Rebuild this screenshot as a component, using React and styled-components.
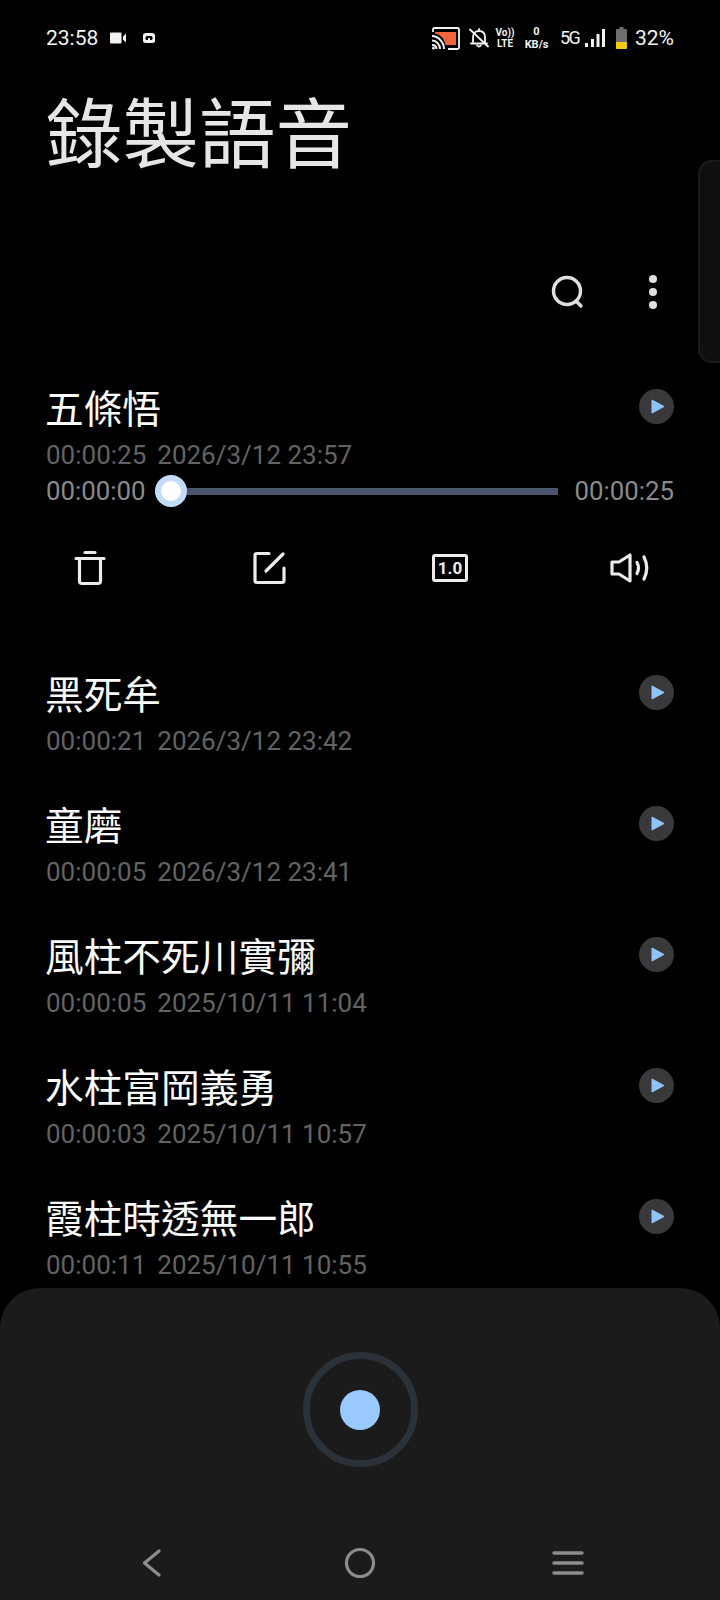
import React from "react";
import styled, { createGlobalStyle } from "styled-components";

const Global = createGlobalStyle`
  html, body { margin: 0; padding: 0; background: #000; }
  #root { width: 720px; height: 1600px; }
`;

const Page = styled.div`
  position: relative;
  width: 720px;
  height: 1600px;
  overflow: hidden;
  background: #000;
  display: flex;
  flex-direction: column;
  font-family: Roboto, "Noto Sans CJK TC", sans-serif;
  color: #fff;
`;

const StatusBar = styled.div`
  height: 76px;
  padding: 0 46px;
  display: flex;
  align-items: center;
  justify-content: space-between;
  font-size: 21px;
  color: #f2f2f2;
`;
const StatusGroup = styled.div`
  display: flex;
  align-items: center;
`;
const StatusText = styled.span`
  display: block;
  margin-left: ${(p) => p.$ml || 0}px;
  width: ${(p) => (p.$w ? `${p.$w}px` : "auto")};
  font-size: ${(p) => p.$size || 21}px;
  letter-spacing: ${(p) => p.$ls || 0}px;
  font-weight: 400;
  line-height: 1;
  white-space: nowrap;
`;
const StatusIcon = styled.svg`
  display: block;
  flex: none;
  margin-left: ${(p) => p.$ml || 0}px;
`;
const TinyStack = styled.div`
  margin-left: ${(p) => p.$ml || 0}px;
  width: ${(p) => p.$w}px;
  display: flex;
  flex-direction: column;
  align-items: center;
  font-size: ${(p) => p.$size || 10}px;
  font-weight: 700;
  line-height: ${(p) => p.$lh || 11}px;
  white-space: nowrap;
`;

const Title = styled.h1`
  margin: 0;
  padding: 0 46px;
  height: 110px;
  font-size: 76.5px;
  font-weight: 400;
  line-height: 105px;
  color: #e6e6e6;
  font-family: "Noto Sans CJK TC", sans-serif;
`;

const Toolbar = styled.div`
  margin-top: 86px;
  height: 40px;
  display: flex;
  justify-content: flex-end;
  align-items: center;
  gap: 64px;
  padding-right: 63px;
  color: #e0e0e0;
`;

const List = styled.div`
  flex: 1;
  margin-top: 69px;
  padding: 0 46px;
  display: flex;
  flex-direction: column;
  gap: 35px;
  min-height: 0;
`;

const Item = styled.div`
  display: flex;
  flex-direction: column;
  margin-bottom: ${(p) => (p.$open ? 36 : 0)}px;
`;
const Row = styled.div`
  display: flex;
  justify-content: space-between;
  align-items: flex-start;
`;
const Name = styled.div`
  margin-left: -1px;
  font-family: "Noto Sans CJK TC", sans-serif;
  font-size: 38.7px;
  line-height: 50px;
  color: #fafafa;
`;
const Meta = styled.div`
  display: flex;
  gap: 11px;
  margin-top: 2px;
  font-size: 26px;
  line-height: 44px;
  color: #636363;
`;
const PlayButton = styled.div`
  width: 35px;
  height: 35px;
  margin-top: 8px;
  border-radius: 50%;
  background: #39393b;
  display: flex;
  align-items: center;
  justify-content: center;
`;

const Player = styled.div`
  height: 28px;
  display: flex;
  align-items: center;
  gap: 10px;
  font-size: 25.8px;
  color: #8a8a8a;
`;
const Track = styled.div`
  flex: 1;
  height: 7px;
  background: #4a566d;
  display: flex;
  align-items: center;
  margin-right: 7px;
`;
const Thumb = styled.div`
  width: 32px;
  height: 32px;
  flex: none;
  box-sizing: border-box;
  border-radius: 50%;
  background: #fff;
  border: 6px solid #c4dcf8;
`;

const Actions = styled.div`
  margin: 35px -46px 0;
  height: 56px;
  display: grid;
  grid-template-columns: repeat(4, 1fr);
  justify-items: center;
  align-items: center;
  color: #ececec;
`;
const SpeedBadge = styled.div`
  width: 36px;
  height: 28px;
  box-sizing: border-box;
  border: 3px solid currentColor;
  border-radius: 3px;
  display: flex;
  align-items: center;
  justify-content: center;
  font-size: 17px;
  font-weight: 700;
  line-height: 1;
`;

const Handle = styled.div`
  position: absolute;
  right: -12px;
  top: 160px;
  width: 34px;
  height: 203px;
  box-sizing: border-box;
  border: 2px solid #1b1b1b;
  border-radius: 14px;
  background: #0f0f0f;
`;

const Sheet = styled.div`
  flex: none;
  height: 312px;
  background: #1b1b1b;
  border-radius: 40px 40px 0 0;
  display: flex;
  flex-direction: column;
  align-items: center;
`;
const RecordRing = styled.div`
  margin-top: 64px;
  width: 115px;
  height: 115px;
  box-sizing: border-box;
  border: 7px solid #2b3138;
  border-radius: 50%;
  display: flex;
  align-items: center;
  justify-content: center;
`;
const RecordDot = styled.div`
  width: 40px;
  height: 40px;
  border-radius: 50%;
  background: #99c9ff;
`;
const NavBar = styled.div`
  margin-top: 66px;
  width: 624px;
  height: 60px;
  display: grid;
  grid-template-columns: repeat(3, 1fr);
  justify-items: center;
  align-items: center;
  color: #8c8c8c;
`;

const Icon = styled.svg`
  display: block;
  fill: none;
  stroke: currentColor;
  stroke-linecap: round;
  stroke-linejoin: round;
`;

const Play = () => (
  <PlayButton>
    <svg width="14" height="15" viewBox="0 0 14 15" style={{ marginLeft: 2 }}>
      <path d="M1 1 L13 7.5 L1 14 Z" fill="#8fc4fb" stroke="#8fc4fb" strokeLinejoin="round" />
    </svg>
  </PlayButton>
);

const records = [
  ["黑死牟", "00:00:21", "2026/3/12 23:42"],
  ["童磨", "00:00:05", "2026/3/12 23:41"],
  ["風柱不死川實彌", "00:00:05", "2025/10/11 11:04"],
  ["水柱富岡義勇", "00:00:03", "2025/10/11 10:57"],
  ["霞柱時透無一郎", "00:00:11", "2025/10/11 10:55"],
];

const Record = ({ name, len, date }) => (
  <Row>
    <div>
      <Name>{name}</Name>
      <Meta>
        <span>{len}</span>
        <span>{date}</span>
      </Meta>
    </div>
    <Play />
  </Row>
);

export default function App() {
  return (
    <Page>
      <Global />
      <StatusBar>
        <StatusGroup>
          <StatusText>23:58</StatusText>
          <StatusIcon $ml={12} width="16" height="12" viewBox="0 0 16 12">
            <rect x="0" y="0.5" width="11.5" height="11" rx="1" fill="#f2f2f2" />
            <path d="M13 4.5 L16 1.5 V10.5 L13 7.5 Z" fill="#f2f2f2" />
          </StatusIcon>
          <StatusIcon $ml={17} width="12" height="10" viewBox="0 0 12 10">
            <rect x="0" y="0" width="12" height="10" rx="2.5" fill="#f2f2f2" />
            <rect x="2.5" y="3" width="7" height="4" rx="1.5" fill="#000" />
            <rect x="5" y="5" width="2" height="3" fill="#f2f2f2" />
          </StatusIcon>
        </StatusGroup>
        <StatusGroup>
          <StatusIcon width="28" height="23" viewBox="0 0 28 23">
            <path d="M3 5 H24 V18 H13.5 C12.5 12 9 7.5 3 6.5 Z" fill="#f0653a" />
            <path d="M1 5 V2.5 Q1 1 2.5 1 H25.5 Q27 1 27 2.5 V20.5 Q27 22 25.5 22 H16" fill="none" stroke="#f2f2f2" strokeWidth="1.8" />
            <path d="M0 9 C6 9 12 15 12 22 M0 13.5 C4.5 13.5 8 17.5 8 22 M0 18 C2.5 18 4.5 19.5 4.5 22" fill="none" stroke="#f2f2f2" strokeWidth="2" />
            <circle cx="1.4" cy="21.2" r="1.4" fill="#f2f2f2" />
          </StatusIcon>
          <StatusIcon $ml={9} width="20" height="20" viewBox="0 0 20 20">
            <path d="M4 15.5 V9 C4 5.5 6.5 3 10 3 C13 3 15.5 5 16 8 V15.5 H4 M2 15.5 H18 M10 1 V3 M8.2 17.5 Q10 19.5 11.8 17.5 M1 1.5 L19 18.5" fill="none" stroke="#f2f2f2" strokeWidth="1.8" strokeLinecap="round" />
          </StatusIcon>
          <TinyStack $ml={7} $w={18} $size={10} $lh={11}>
            <span>Vo))</span>
            <span>LTE</span>
          </TinyStack>
          <TinyStack $ml={10} $w={25} $size={11} $lh={13}>
            <span>0</span>
            <span>KB/s</span>
          </TinyStack>
          <StatusText $ml={11} $w={18} $size={18} $ls={-1.5}>5G</StatusText>
          <StatusIcon $ml={7} width="20" height="19" viewBox="0 0 20 19">
            <rect x="0" y="14" width="3" height="4" fill="#f2f2f2" />
            <rect x="6" y="10" width="3" height="8" fill="#f2f2f2" />
            <rect x="11.5" y="5" width="3" height="13" fill="#f2f2f2" />
            <rect x="17" y="0" width="3" height="18" fill="#f2f2f2" />
          </StatusIcon>
          <StatusIcon $ml={11} width="11" height="22" viewBox="0 0 11 22">
            <path d="M3.5 0 H7.5 V2 H10 Q11 2 11 3 V21 Q11 22 10 22 H1 Q0 22 0 21 V3 Q0 2 1 2 H3.5 Z" fill="#6f6f6f" />
            <path d="M0 15 H11 V21 Q11 22 10 22 H1 Q0 22 0 21 Z" fill="#f3c90c" />
          </StatusIcon>
          <StatusText $ml={8}>32%</StatusText>
        </StatusGroup>
      </StatusBar>

      <Title>錄製語音</Title>

      <Toolbar>
        <Icon width="34" height="34" viewBox="0 0 34 34" strokeWidth="3.4">
          <circle cx="16" cy="16" r="13.5" />
          <path d="M25 26 L30 31" />
        </Icon>
        <svg width="8" height="34" viewBox="0 0 8 34">
          <circle cx="4" cy="4" r="4" fill="#e0e0e0" />
          <circle cx="4" cy="17" r="4" fill="#e0e0e0" />
          <circle cx="4" cy="30" r="4" fill="#e0e0e0" />
        </svg>
      </Toolbar>

      <List>
        <Item $open>
          <Record name="五條悟" len="00:00:25" date="2026/3/12 23:57" />
          <Player>
            <span>00:00:00</span>
            <Track>
              <Thumb />
            </Track>
            <span>00:00:25</span>
          </Player>
          <Actions>
            <Icon width="32" height="36" viewBox="0 0 32 36" strokeWidth="3.2">
              <path d="M11 2.5 H21 M2 8.5 H30 M5.5 8.5 V31 Q5.5 33.5 8 33.5 H24 Q26.5 33.5 26.5 31 V8.5" />
            </Icon>
            <Icon width="34" height="34" viewBox="0 0 34 34" strokeWidth="3.2">
              <path d="M16 2.5 H4 Q2 2.5 2 4.5 V29.5 Q2 31.5 4 31.5 H29 Q31 31.5 31 29.5 V17" />
              <path d="M13 20 L30 3" />
            </Icon>
            <SpeedBadge>1.0</SpeedBadge>
            <Icon width="40" height="30" viewBox="0 0 40 30" strokeWidth="3.2">
              <path d="M2 9 H9 L20 2 V28 L9 21 H2 Z" />
              <path d="M27 9.5 Q30 15 27 20.5" />
              <path d="M34 4 Q39.5 15 34 26" />
            </Icon>
          </Actions>
        </Item>
        {records.map(([name, len, date]) => (
          <Record key={name} name={name} len={len} date={date} />
        ))}
      </List>

      <Handle />

      <Sheet>
        <RecordRing>
          <RecordDot />
        </RecordRing>
        <NavBar>
          <Icon width="20" height="28" viewBox="0 0 20 28" strokeWidth="3.2">
            <path d="M17 2 L2.5 14 L17 26" />
          </Icon>
          <Icon width="32" height="32" viewBox="0 0 32 32" strokeWidth="3.2">
            <circle cx="16" cy="16" r="13.5" />
          </Icon>
          <Icon width="32" height="26" viewBox="0 0 32 26" strokeWidth="3.4">
            <path d="M2 3 H30 M2 13 H30 M2 23 H30" />
          </Icon>
        </NavBar>
      </Sheet>
    </Page>
  );
}
